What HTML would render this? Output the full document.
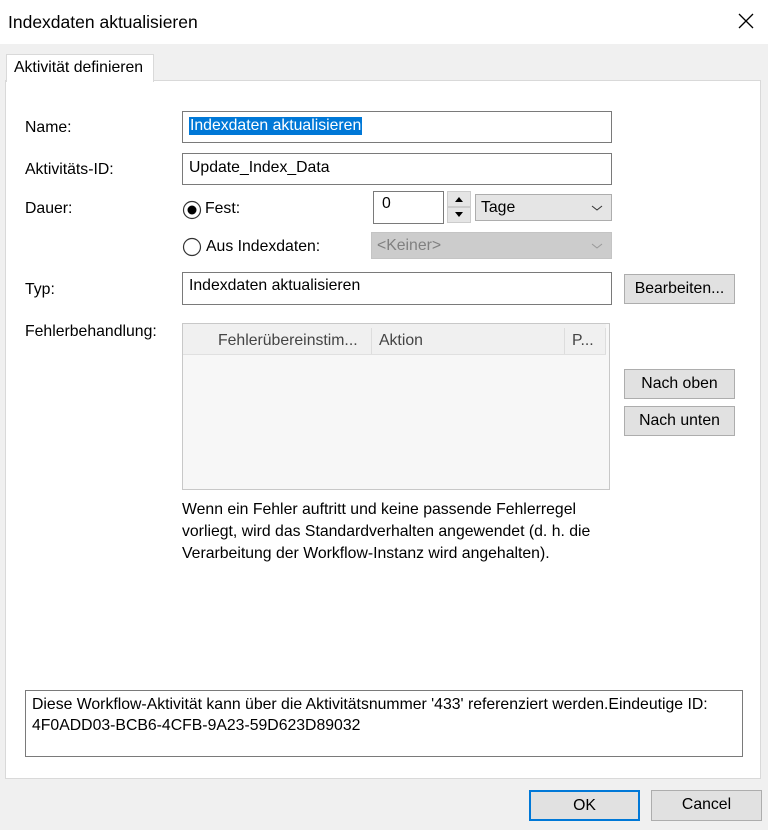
<!DOCTYPE html>
<html><head><style>
*{box-sizing:border-box;margin:0;padding:0}
body{width:768px;height:830px;background:#f0f0f0;font-family:"Liberation Sans",sans-serif;font-size:15.8px;color:#000;position:relative;overflow:hidden}
.a{position:absolute;white-space:nowrap}
.box{position:absolute;background:#fff;border:1px solid #7a7a7a}
.btn{position:absolute;background:#e1e1e1;border:1px solid #adadad;text-align:center;line-height:28px}
</style></head><body>
<div class="a" style="left:0;top:0;width:768px;height:44px;background:#fff"></div>
<div class="a" style="left:8px;top:12px;font-size:17.5px">Indexdaten aktualisieren</div>
<svg class="a" style="left:738px;top:13px" width="16" height="16"><path d="M1 1L15 15M15 1L1 15" stroke="#000" stroke-width="1.3"/></svg>
<div class="a" style="left:5px;top:80px;width:756px;height:699px;background:#fff;border:1px solid #d9d9d9"></div>
<div class="a" style="left:6px;top:54px;width:148px;height:28px;background:#fff;border:1px solid #d9d9d9;border-bottom:none;padding:4px 0 0 7px">Aktivität definieren</div>

<div class="a" style="left:25px;top:119px">Name:</div>
<div class="box" style="left:182px;top:111px;width:430px;height:32px"><span style="position:absolute;left:6px;top:5px;background:#0078d7;color:#fff;padding:0 1px">Indexdaten aktualisieren</span></div>
<div class="a" style="left:25px;top:161px">Aktivitäts-ID:</div>
<div class="box" style="left:182px;top:153px;width:430px;height:32px;padding:5px 0 0 6px">Update_Index_Data</div>
<div class="a" style="left:25px;top:200px">Dauer:</div>
<svg class="a" style="left:182px;top:200px" width="20" height="20"><circle cx="10" cy="10" r="8.5" fill="#fff" stroke="#333" stroke-width="1.2"/><circle cx="10" cy="10" r="4.5" fill="#000"/></svg>
<div class="a" style="left:205px;top:200px">Fest:</div>
<div class="box" style="left:373px;top:191px;width:71px;height:33px;padding:3px 0 0 8px">0</div>
<div class="a" style="left:447px;top:191px;width:24px;height:16px;background:#e5e5e5;border:1px solid #ccc"><svg width="22" height="14"><path d="M7 10L11 5L15 10Z" fill="#000"/></svg></div>
<div class="a" style="left:447px;top:207px;width:24px;height:16px;background:#e5e5e5;border:1px solid #ccc"><svg width="22" height="14"><path d="M7 4L11 9L15 4Z" fill="#000"/></svg></div>
<div class="a" style="left:475px;top:194px;width:137px;height:27px;background:#e5e5e5;border:1px solid #adadad;padding:4px 0 0 5px">Tage<svg style="position:absolute;right:8px;top:9px" width="12" height="8"><path d="M1 2L6 6L11 2" fill="none" stroke="#333"/></svg></div>
<svg class="a" style="left:182px;top:237px" width="20" height="20"><circle cx="10" cy="10" r="8.5" fill="#fff" stroke="#333" stroke-width="1.2"/></svg>
<div class="a" style="left:206px;top:238px">Aus Indexdaten:</div>
<div class="a" style="left:371px;top:232px;width:241px;height:27px;background:#cccccc;border:1px solid #c4c4c4;padding:4px 0 0 5px;color:#808080">&lt;Keiner&gt;<svg style="position:absolute;right:8px;top:9px" width="12" height="8"><path d="M1 2L6 6L11 2" fill="none" stroke="#999"/></svg></div>
<div class="a" style="left:25px;top:281px">Typ:</div>
<div class="box" style="left:182px;top:272px;width:430px;height:33px;padding:4px 0 0 6px">Indexdaten aktualisieren</div>
<div class="btn" style="left:624px;top:274px;width:111px;height:30px">Bearbeiten...</div>
<div class="a" style="left:25px;top:323px">Fehlerbehandlung:</div>
<div class="a" style="left:182px;top:323px;width:428px;height:167px;background:#f7f7f7;border:1px solid #c8c8c8"></div>
<div class="a" style="left:183px;top:324px;width:423px;height:31px;background:#f0f0f0;border-bottom:1px solid #e0e0e0;color:#444"><span style="position:absolute;left:35px;top:8px">Fehlerübereinstim...</span><span style="position:absolute;left:188px;top:4px;width:1px;height:26px;background:#ddd"></span><span style="position:absolute;left:196px;top:8px">Aktion</span><span style="position:absolute;left:381px;top:4px;width:1px;height:26px;background:#ddd"></span><span style="position:absolute;left:389px;top:8px">P...</span><span style="position:absolute;left:422px;top:4px;width:1px;height:26px;background:#ddd"></span></div>
<div class="btn" style="left:624px;top:369px;width:111px;height:30px">Nach oben</div>
<div class="btn" style="left:624px;top:406px;width:111px;height:30px">Nach unten</div>
<div class="a" style="left:182px;top:499px;line-height:22px;white-space:normal;width:430px">Wenn ein Fehler auftritt und keine passende Fehlerregel vorliegt, wird das Standardverhalten angewendet (d. h. die Verarbeitung der Workflow-Instanz wird angehalten).</div>
<div class="box" style="left:25px;top:690px;width:718px;height:67px;padding:3px 0 0 6px;line-height:21px;white-space:normal">Diese Workflow-Aktivität kann über die Aktivitätsnummer '433' referenziert werden.Eindeutige ID:<br>4F0ADD03-BCB6-4CFB-9A23-59D623D89032</div>
<div class="btn" style="left:529px;top:790px;width:111px;height:31px;border:2px solid #0078d7;line-height:27px">OK</div>
<div class="btn" style="left:651px;top:790px;width:111px;height:31px">Cancel</div>
</body></html>
